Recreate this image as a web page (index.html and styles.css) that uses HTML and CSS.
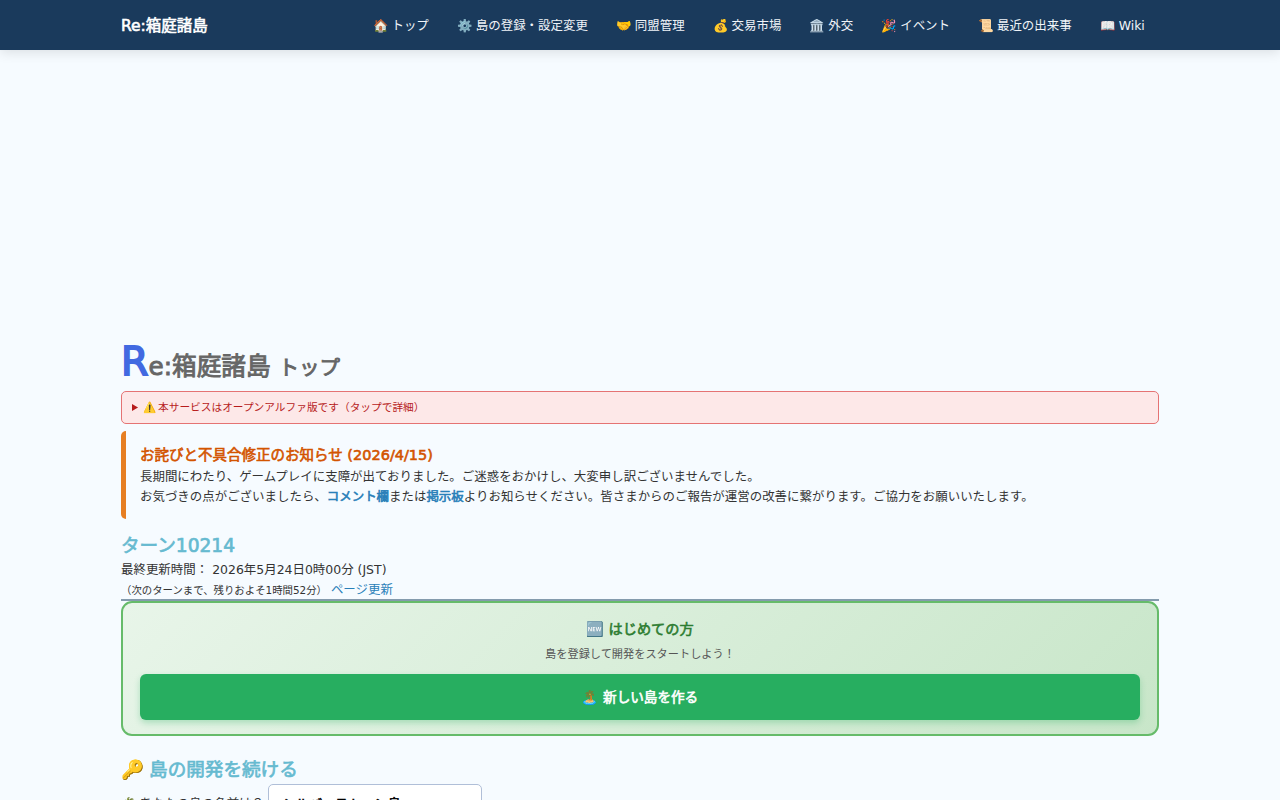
FILE: index.html
```html
<!doctype html>
<html lang="ja">
<head>
<meta charset="utf-8">
<title>Re:箱庭諸島 トップ</title>
<link rel="stylesheet" href="styles.css">
</head>

<body>
<header class="header">
	<div class="container headerInner">
		<a class="logo" href="#">Re:箱庭諸島</a>
		<nav class="nav">
			<a href="#">🏠 トップ</a>
			<a href="#">⚙️ 島の登録・設定変更</a>
			<a href="#">🤝 同盟管理</a>
			<a href="#">💰 交易市場</a>
			<a href="#">🏛️ 外交</a>
			<a href="#">🎉 イベント</a>
			<a href="#">📜 最近の出来事</a>
			<a href="#">📖 Wiki</a>
		</nav>
	</div>
</header>

<main class="container">
	<div class="adSpace"></div>
	<h1 class="pageTitle"><span class="initial">R</span>e:箱庭諸島 <span class="sub">トップ</span></h1>

	<details class="alpha">
		<summary>⚠️ 本サービスはオープンアルファ版です（タップで詳細）</summary>
	</details>

	<section class="notice">
		<h2>お詫びと不具合修正のお知らせ (2026/4/15)</h2>
		<p>長期間にわたり、ゲームプレイに支障が出ておりました。ご迷惑をおかけし、大変申し訳ございませんでした。</p>
		<p>お気づきの点がございましたら、<a href="#">コメント欄</a>または<a href="#">掲示板</a>よりお知らせください。皆さまからのご報告が運営の改善に繋がります。ご協力をお願いいたします。</p>
	</section>

	<section class="turn">
		<h2 class="heading">ターン10214</h2>
		<p>最終更新時間： 2026年5月24日0時00分 (JST)</p>
		<p><small>（次のターンまで、残りおよそ1時間52分）</small> <a href="#">ページ更新</a></p>
	</section>
	<hr class="line">

	<section class="beginner">
		<h3><span class="emoji">🆕</span> はじめての方</h3>
		<p>島を登録して開発をスタートしよう！</p>
		<a class="createBtn" href="#">🏝️ 新しい島を作る</a>
	</section>

	<section class="login">
		<h2 class="heading">🔑 島の開発を続ける</h2>
		<form class="loginRow">
			<label for="island">🌴 あなたの島の名前は？</label>
			<input id="island" class="islandName" type="text" value="シルバーストーン島">
		</form>
	</section>
</main>
</body>
</html>
```
FILE: styles.css
```css
*{
	box-sizing: border-box;
}

body{
	margin: 0;
	height: 800px;
	overflow: hidden;
	background: #f6fbff;
	color: #333;
	font-family: "DejaVu Sans", "Noto Sans CJK JP", "Noto Color Emoji", sans-serif;
	font-size: 12.46px;
	line-height: 20px;
}

h1, h2, h3, p{
	margin: 0;
	font-weight: normal;
}

a{
	color: #2980b9;
	text-decoration: none;
}

.container{
	width: 1038px;
	margin: 0 auto;
}

.header{
	height: 50px;
	background: #1a3a5c;
	box-shadow: 0 2px 12px rgba(0,0,0,0.12);
}

.headerInner{
	display: flex;
	align-items: center;
	justify-content: space-between;
	height: 50px;
	padding-top: 1px;
}

.logo{
	color: #fff;
	font-size: 15.5px;
	-webkit-text-stroke: 0.6px;
}

.nav{
	display: flex;
}

.nav a{
	padding: 0 14.2px;
	color: #f0f4f8;
	white-space: nowrap;
	word-spacing: -0.9px;
}

.adSpace{
	height: 287px;
}

.pageTitle{
	height: 54px;
	color: #666;
	font-size: 24.7px;
	line-height: 48px;
	-webkit-text-stroke: 0.9px;
}

.pageTitle .initial{
	color: #4169e1;
	font-size: 39.5px;
	-webkit-text-stroke: 1.8px;
}

.pageTitle .sub{
	font-size: 20.5px;
}

.alpha{
	height: 33px;
	padding: 0 10px;
	border: 1px solid #e57373;
	border-radius: 5px;
	background: #fde8e8;
	color: #b71c1c;
	font-size: 10.7px;
	line-height: 31px;
	word-spacing: -2px;
}

.notice{
	height: 88px;
	margin-top: 7px;
	padding: 14px 14px 0;
	border-left: 5px solid #e67e22;
	border-radius: 5px;
}

.notice h2{
	margin-bottom: 1px;
	color: #d35400;
	font-size: 14.5px;
	line-height: 21px;
	-webkit-text-stroke: 0.6px;
}

.notice a{
	-webkit-text-stroke: 0.6px;
}

.heading{
	color: #66bad0;
	font-size: 18.6px;
	line-height: 28px;
	word-spacing: -1px;
	-webkit-text-stroke: 0.7px;
}

.turn{
	height: 80px;
	padding-top: 13px;
}

.turn small{
	font-size: 10.4px;
}

.line{
	height: 2px;
	margin: 0;
	border: 0;
	background: #849bad;
}

.beginner{
	height: 135px;
	padding: 16px 17px 0;
	border: 2px solid #66bb6a;
	border-radius: 11px;
	background: linear-gradient(135deg, #e8f5e9, #c8e6c9);
	text-align: center;
}

.beginner h3{
	color: #2e7d32;
	font-size: 14.2px;
	line-height: 21px;
	-webkit-text-stroke: 0.6px;
}

.emoji{
	font-family: "Noto Color Emoji";
}

.beginner p{
	margin-top: 6px;
	color: #555;
	font-size: 11.2px;
	line-height: 18px;
}

.createBtn{
	display: block;
	height: 46px;
	margin-top: 10px;
	border-radius: 6px;
	background: #27ae60;
	box-shadow: 0 3px 6px rgba(39,174,96,0.3);
	color: #fff;
	font-size: 13.6px;
	line-height: 46px;
	-webkit-text-stroke: 0.6px;
}

.login{
	padding-top: 20px;
}

.loginRow{
	display: flex;
	align-items: center;
	gap: 4px;
}

.loginRow label{
	padding-top: 2px;
	white-space: nowrap;
	word-spacing: -1px;
}

.islandName{
	width: 214px;
	height: 38px;
	padding: 0 13px;
	border: 1px solid #b0bfd8;
	border-radius: 5px;
	background: #fff;
	color: #000;
	font-family: inherit;
	font-size: 13.4px;
	-webkit-text-stroke: 0.5px;
}
```
